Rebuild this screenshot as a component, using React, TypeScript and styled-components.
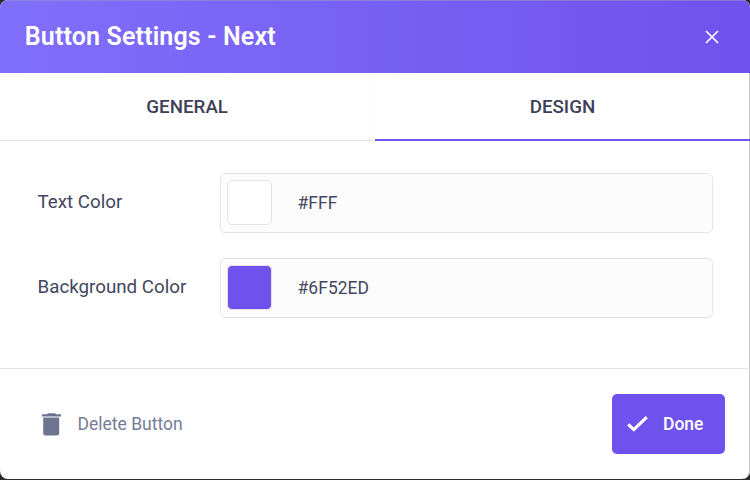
import React from "react";
import styled, { createGlobalStyle } from "styled-components";

const GlobalStyle = createGlobalStyle`
  *, *::before, *::after { box-sizing: border-box; }
  body {
    margin: 0;
    background: #2b2b2e;
    font-family: Roboto, "Liberation Sans", sans-serif;
    color: #434660;
  }
  button, input { font: inherit; color: inherit; }
`;

const Backdrop = styled.div`
  height: 480px;
  overflow: hidden;
  padding: 0 0.4px 0.8px 0;
`;

const Dialog = styled.section`
  display: flex;
  flex-direction: column;
  height: 479.2px;
  background: #fff;
  border-radius: 8px;
  overflow: hidden;
  box-shadow: inset -1px 0 0 #c9c9c9;
`;

const Header = styled.header`
  display: flex;
  align-items: center;
  justify-content: space-between;
  flex: none;
  height: 73px;
  padding: 0 30.3px 0 24.8px;
  background: linear-gradient(90deg, #806ffb, #6f52ed);
  box-shadow: inset 0 1px 0 rgba(160, 155, 200, 0.5);
  color: #fff;
`;

const Title = styled.h1`
  margin: 0;
  font-size: 25px;
  line-height: 30px;
  font-weight: 600;
  letter-spacing: 0.16px;
`;

const CloseButton = styled.button`
  display: flex;
  padding: 0;
  border: 0;
  background: none;
  color: #fff;
`;

const Tabs = styled.nav`
  display: flex;
  flex: none;
  height: 68px;
`;

const Tab = styled.button<{ $active?: boolean }>`
  flex: 1;
  padding: 0;
  border: 0;
  border-bottom: ${(p) => (p.$active ? "2px solid #6f52ed" : "1px solid #dfdfe1")};
  border-right: ${(p) => (p.$active ? "0" : "1px solid #f9f9fa")};
  padding-top: ${(p) => (p.$active ? "1px" : "0")};
  background: none;
  color: #3d4058;
  font-size: 18.75px;
  font-weight: 500;
`;

const Fields = styled.div`
  display: flex;
  flex-direction: column;
  flex: none;
  gap: 25px;
  height: 227px;
  padding: 32px 37px 0 37.5px;
`;

const Field = styled.label`
  display: grid;
  grid-template-columns: 182.5px 1fr;
`;

const FieldLabel = styled.span`
  padding-bottom: 3px;
  align-self: center;
  font-size: 18.75px;
  line-height: 22px;
`;

const ColorInput = styled.span`
  display: flex;
  align-items: center;
  gap: 26px;
  height: 60px;
  padding: 0 5.6px;
  border: 1px solid #e5e5e6;
  border-radius: 5px;
  background: #fcfcfc;
`;

const Swatch = styled.span<{ $color: string }>`
  width: 45px;
  height: 45px;
  margin-bottom: 1px;
  border: 1px solid #e3e3e6;
  border-radius: 5px;
  background: ${(p) => p.$color};
`;

const ColorValue = styled.span`
  font-size: 17.5px;
  line-height: 22px;
`;

const Footer = styled.footer`
  display: flex;
  align-items: center;
  justify-content: space-between;
  flex: 1;
  padding: 0 24.6px 0 42px;
  border-top: 1px solid #e5e5e7;
`;

const DeleteButton = styled.button`
  display: flex;
  align-items: center;
  gap: 16.5px;
  padding: 0 0 1px;
  border: 0;
  background: none;
  color: #757c97;
  font-size: 17.5px;
`;

const TrashIcon = styled.svg`
  margin-top: 1px;
  color: #6d7490;
`;

const DoneButton = styled.button`
  display: flex;
  align-items: center;
  gap: 15.5px;
  width: 113px;
  height: 60px;
  padding: 0 0 1px 14.5px;
  border: 0;
  border-radius: 5px;
  background: #6f52ed;
  color: #fff;
  font-size: 17.5px;
  font-weight: 500;
`;

const fields = [
  { label: "Text Color", value: "#FFF" },
  { label: "Background Color", value: "#6F52ED" },
];

export default function App() {
  return (
    <Backdrop>
      <GlobalStyle />
      <Dialog>
        <Header>
          <Title>Button Settings - Next</Title>
          <CloseButton aria-label="Close">
            <svg width="14" height="14" viewBox="0 0 14 14" fill="none" stroke="currentColor" strokeWidth="1.7">
              <path d="M1 1l12 12M13 1L1 13" />
            </svg>
          </CloseButton>
        </Header>
        <Tabs>
          <Tab>GENERAL</Tab>
          <Tab $active>DESIGN</Tab>
        </Tabs>
        <Fields>
          {fields.map((f) => (
            <Field key={f.label}>
              <FieldLabel>{f.label}</FieldLabel>
              <ColorInput>
                <Swatch $color={f.value} />
                <ColorValue>{f.value}</ColorValue>
              </ColorInput>
            </Field>
          ))}
        </Fields>
        <Footer>
          <DeleteButton>
            <TrashIcon width="19" height="23" viewBox="0 0 19 23" fill="currentColor">
              <path d="M0 1.3h5L6 .2h7l1 1.1h5v2.3H0zM1.2 4.6h16V20a2.5 2.5 0 0 1-2.5 2.5h-11a2.5 2.5 0 0 1-2.5-2.5z" />
            </TrashIcon>
            Delete Button
          </DeleteButton>
          <DoneButton>
            <svg width="21" height="17" viewBox="0 0 21 17" fill="none" stroke="currentColor" strokeWidth="3.2">
              <path d="M1.2 9.4l5.6 5.2L19.8 2.2" />
            </svg>
            Done
          </DoneButton>
        </Footer>
      </Dialog>
    </Backdrop>
  );
}
